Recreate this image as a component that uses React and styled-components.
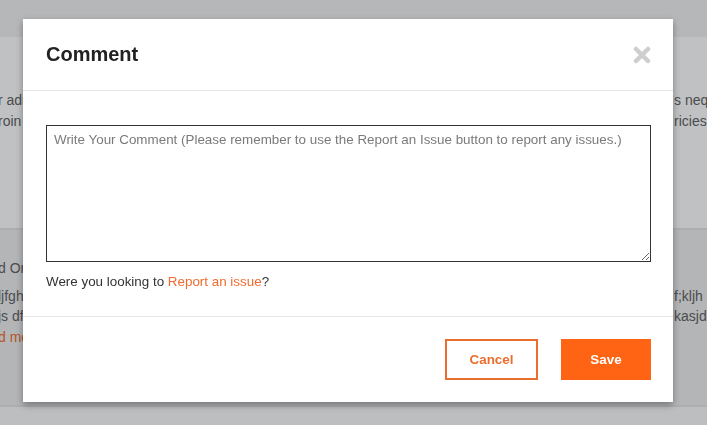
import React from "react";
import styled, { createGlobalStyle } from "styled-components";

const GlobalStyle = createGlobalStyle`
  html, body {
    margin: 0;
    padding: 0;
    overflow: hidden;
    font-family: "Liberation Sans", Arial, sans-serif;
  }
`;

const Page = styled.div`
  width: 707px;
  height: 425px;
  background: #bdbec0;
  overflow: hidden;
`;

const TopBar = styled.div`
  height: 37px;
  background: #b6b7b9;
`;

const Card = styled.section`
  height: ${(p) => p.$height}px;
  padding-top: ${(p) => p.$top}px;
  box-sizing: border-box;
  background: ${(p) => p.$bg};
  border-bottom: 2px solid #adaeb0;
  display: flex;
  flex-direction: column;
`;

const Line = styled.div`
  display: grid;
  grid-template-columns: 1fr 33px;
  white-space: nowrap;
  font-size: 14px;
  line-height: ${(p) => p.$lh || 21}px;
  color: #4b4c4e;
  margin-left: -2px;
  overflow: hidden;

  span {
    overflow: hidden;
  }

  span.accent {
    color: #b6552a;
  }
`;

const Overlay = styled.div`
  position: fixed;
  inset: 0;
  padding: 19px 34px 0 23px;
`;

const Modal = styled.div`
  width: 650px;
  background: #fff;
  box-shadow: 0 3px 7px rgba(0, 0, 0, 0.35);
`;

const Header = styled.header`
  height: 71px;
  padding: 0 22px 0 23px;
  display: flex;
  align-items: center;
  justify-content: space-between;
  border-bottom: 1px solid #e6e6e6;
`;

const Title = styled.h2`
  margin: 0;
  font-size: 20px;
  font-weight: 700;
  color: #222;
`;

const CloseButton = styled.button`
  border: 0;
  background: none;
  padding: 0;
  width: 18px;
  height: 18px;
  display: flex;
  cursor: pointer;
`;

const Body = styled.div`
  padding: 34px 22px 26px 23px;
  border-bottom: 1px solid #e6e6e6;
`;

const TextArea = styled.textarea`
  display: block;
  width: 100%;
  height: 137px;
  box-sizing: border-box;
  border: 1px solid #333;
  padding: 6px 7px;
  font-family: "Liberation Sans", Arial, sans-serif;
  font-size: 13.4px;
  color: #333;
  resize: vertical;
  outline: none;

  &::placeholder {
    color: #7a7a7a;
  }
`;

const Hint = styled.p`
  margin: 12px 0 0;
  font-size: 13.4px;
  line-height: 16px;
  color: #333;

  a {
    color: #f26a2e;
    text-decoration: none;
  }
`;

const Footer = styled.footer`
  display: flex;
  justify-content: flex-end;
  gap: 23px;
  padding: 22px 22px 22px 23px;
`;

const Button = styled.button`
  height: 41px;
  width: ${(p) => (p.$primary ? 90 : 93)}px;
  box-sizing: border-box;
  border: 2px solid ${(p) => (p.$primary ? "#ff6314" : "#ea6f2f")};
  background: ${(p) => (p.$primary ? "#ff6314" : "#fff")};
  color: ${(p) => (p.$primary ? "#fff" : "#ea6f2f")};
  font-family: "Liberation Sans", Arial, sans-serif;
  font-size: 13.4px;
  font-weight: 700;
  cursor: pointer;
`;

export default function App() {
  return (
    <>
      <GlobalStyle />
      <Page>
        <TopBar />
        <Card $height={193} $top={53} $bg="#c0c1c3">
          <Line>
            <span>r adipiscing elit</span>
            <span>s neque</span>
          </Line>
          <Line>
            <span>roin lorem</span>
            <span>ricies</span>
          </Line>
        </Card>
        <Card $height={177} $top={27} $bg="#b4b5b7">
          <Line $lh={23} style={{ marginBottom: 7 }}>
            <span>d Or</span>
            <span></span>
          </Line>
          <Line $lh={19}>
            <span>ljfgh</span>
            <span>f;kljh sd</span>
          </Line>
          <Line $lh={21}>
            <span>js df</span>
            <span>kasjd</span>
          </Line>
          <Line $lh={20}>
            <span className="accent">d more</span>
            <span></span>
          </Line>
        </Card>
      </Page>
      <Overlay>
        <Modal>
          <Header>
            <Title>Comment</Title>
            <CloseButton aria-label="Close">
              <svg width="18" height="18" viewBox="0 0 18 18">
                <path
                  d="M3 3 L15 15 M15 3 L3 15"
                  stroke="#cecece"
                  strokeWidth="4.5"
                  strokeLinecap="round"
                />
              </svg>
            </CloseButton>
          </Header>
          <Body>
            <TextArea placeholder="Write Your Comment (Please remember to use the Report an Issue button to report any issues.)" />
            <Hint>
              Were you looking to <a href="#report">Report an issue</a>?
            </Hint>
          </Body>
          <Footer>
            <Button>Cancel</Button>
            <Button $primary>Save</Button>
          </Footer>
        </Modal>
      </Overlay>
    </>
  );
}
